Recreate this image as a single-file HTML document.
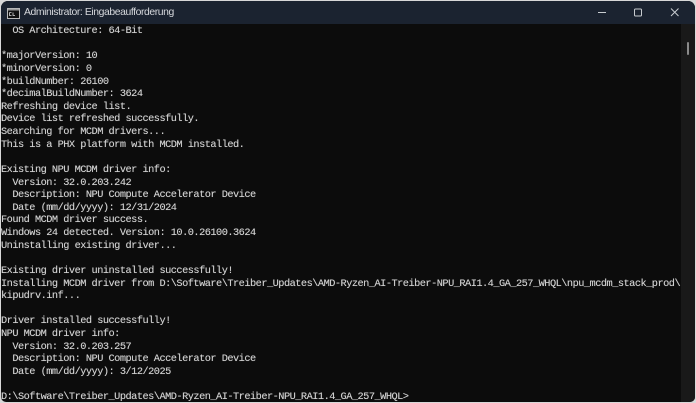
<!DOCTYPE html>
<html><head><meta charset="utf-8">
<style>
html,body{margin:0;padding:0;background:#d8d8d8;}
body{width:696px;height:403px;overflow:hidden;position:relative;}
#win{position:absolute;left:1px;top:1px;width:694px;height:401px;background:#0c0c0c;border-radius:7px 7px 5px 5px;overflow:hidden;}
#bar{position:absolute;left:0;top:0;width:694px;height:23px;background:#1b2330;}
#title{position:absolute;left:23px;top:5px;font:10.4px/14px "Liberation Sans",sans-serif;letter-spacing:-.41px;color:#d6d8dc;white-space:nowrap;}
#term{position:absolute;left:0;top:24px;margin:0;font:10.3px/12.62px "Liberation Mono",monospace;letter-spacing:-.52px;color:#d2d2d2;text-shadow:0 0 .5px rgba(204,204,204,.7);white-space:pre;}
#sb{position:absolute;right:0;top:23px;width:14px;height:378px;background:#191919;}
#th{position:absolute;left:6px;top:18px;width:2px;height:13px;background:#8a8a8a;border-radius:1px;}
svg{position:absolute;}
</style></head><body>
<div id="win">
<div id="bar"></div>
<svg style="left:6px;top:7px" width="13" height="11" viewBox="0 0 13 11"><rect x=".5" y=".5" width="12" height="10" fill="#111" stroke="#b8b8b8"/><rect x="1" y="1" width="11" height="1.5" fill="#999"/><path d="M2.5 4.5h2M2.5 4.5v3h2M6 4.5v3h2" stroke="#ddd" stroke-width=".8" fill="none"/></svg>
<div id="title">Administrator: Eingabeaufforderung</div>
<svg style="left:597px;top:5px" width="96" height="14" viewBox="0 0 96 14"><path d="M0 6.5h8" stroke="#c8ccd0" stroke-width="1"/><rect x="36.5" y="3" width="7" height="7" rx="1" fill="none" stroke="#c8ccd0" stroke-width="1"/><path d="M73 2.5l7.5 7.5M80.5 2.5L73 10" stroke="#c8ccd0" stroke-width="1"/></svg>
<pre id="term">  OS Architecture: 64-Bit

*majorVersion: 10
*minorVersion: 0
*buildNumber: 26100
*decimalBuildNumber: 3624
Refreshing device list.
Device list refreshed successfully.
Searching for MCDM drivers...
This is a PHX platform with MCDM installed.

Existing NPU MCDM driver info:
  Version: 32.0.203.242
  Description: NPU Compute Accelerator Device
  Date (mm/dd/yyyy): 12/31/2024
Found MCDM driver success.
Windows 24 detected. Version: 10.0.26100.3624
Uninstalling existing driver...

Existing driver uninstalled successfully!
Installing MCDM driver from D:\Software\Treiber_Updates\AMD-Ryzen_AI-Treiber-NPU_RAI1.4_GA_257_WHQL\npu_mcdm_stack_prod\
kipudrv.inf...

Driver installed successfully!
NPU MCDM driver info:
  Version: 32.0.203.257
  Description: NPU Compute Accelerator Device
  Date (mm/dd/yyyy): 3/12/2025

D:\Software\Treiber_Updates\AMD-Ryzen_AI-Treiber-NPU_RAI1.4_GA_257_WHQL&gt;</pre>
<div id="sb"><div id="th"></div></div>
</div>
</body></html>
